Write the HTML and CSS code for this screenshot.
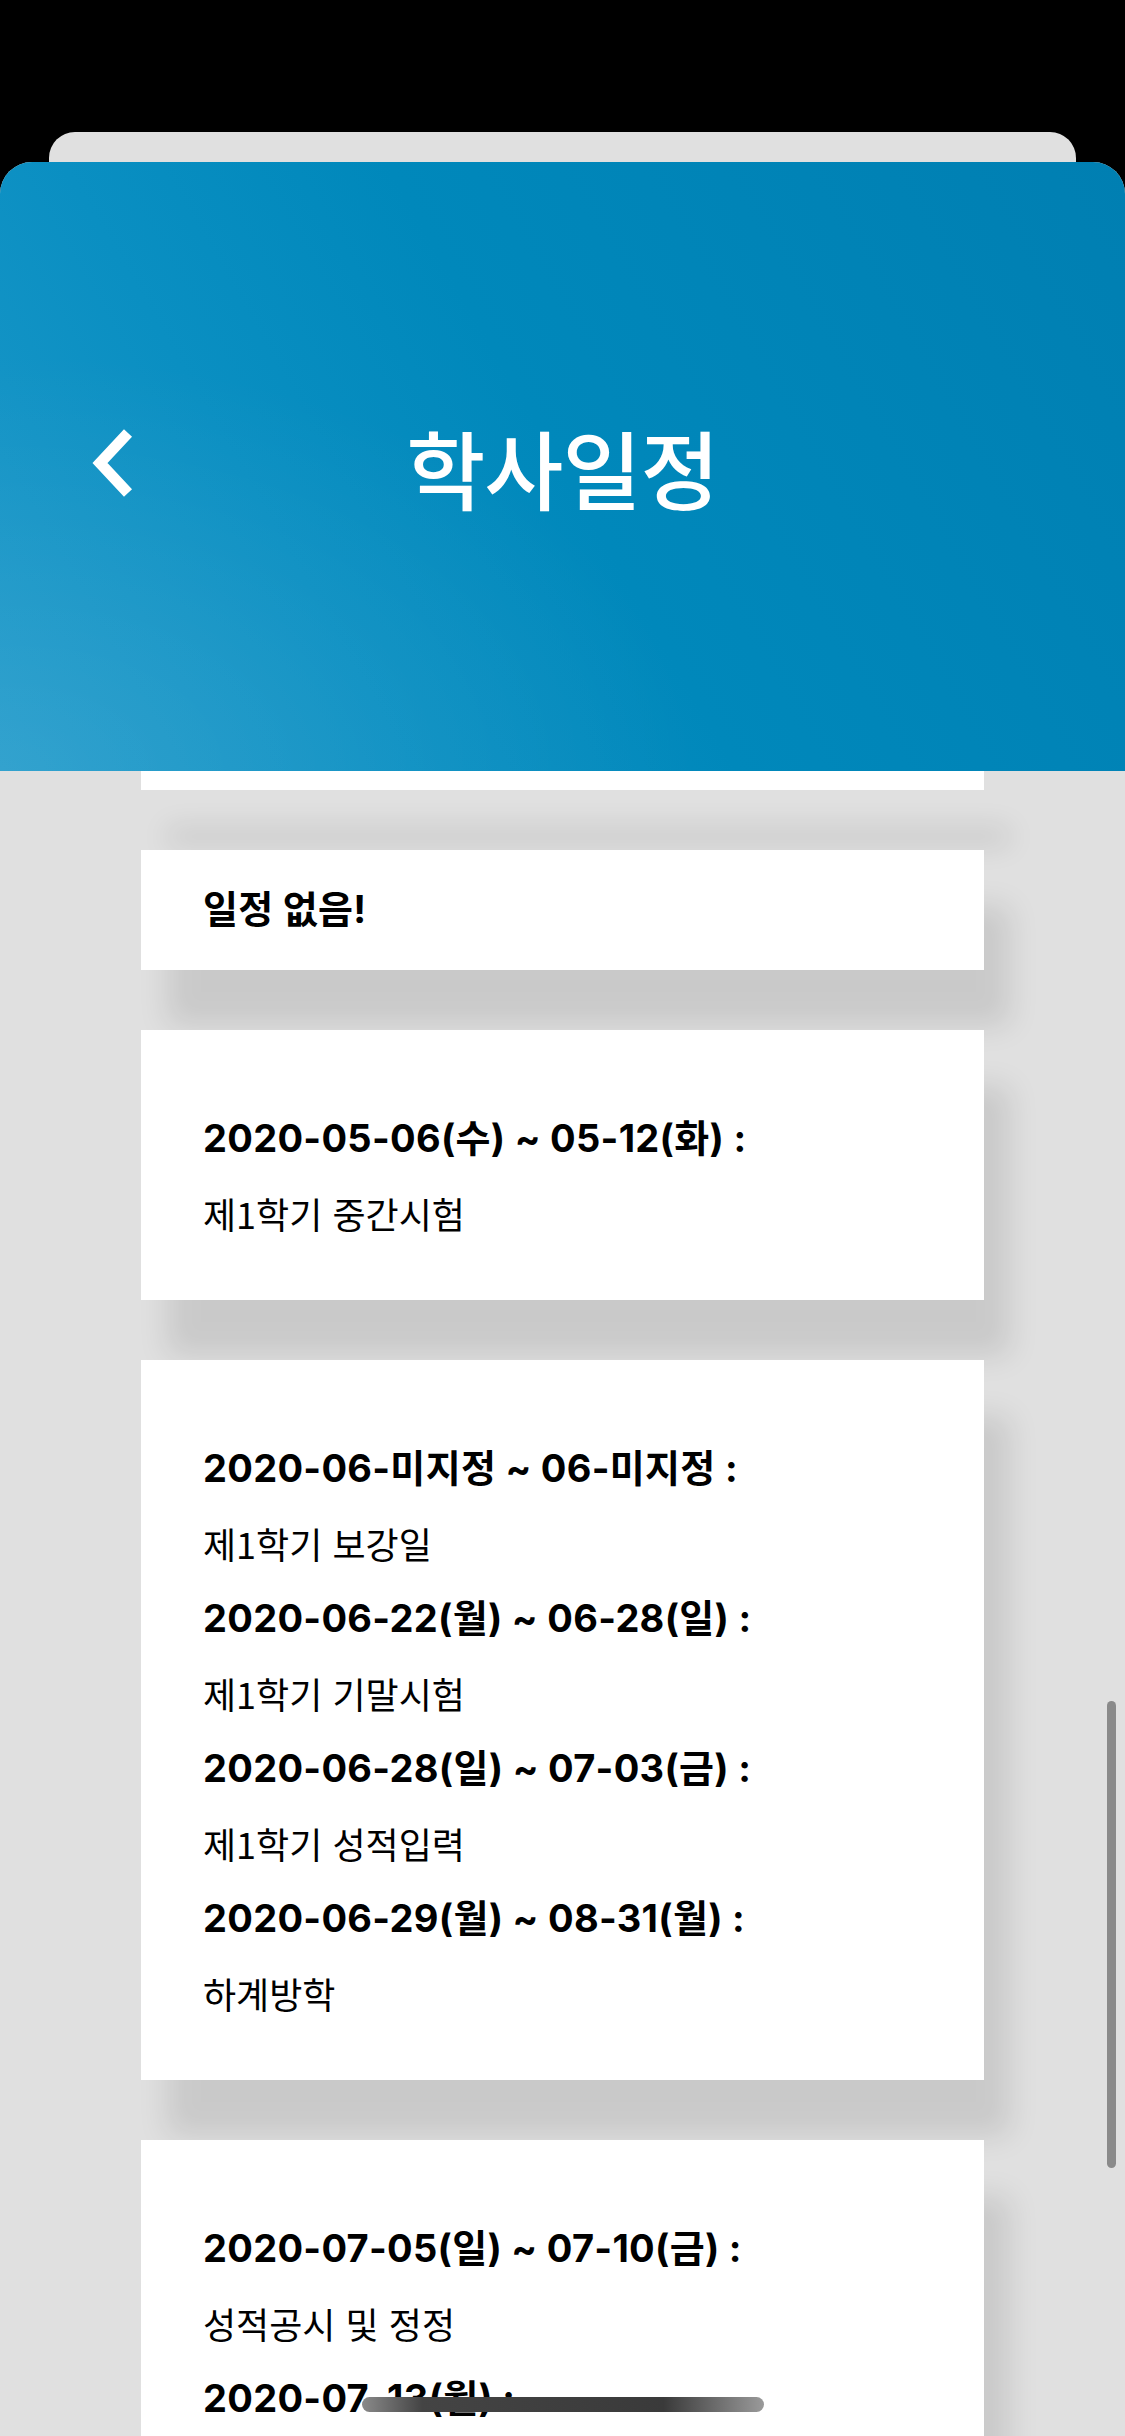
FILE: index.html
```html
<!DOCTYPE html>
<html lang="ko">
  <head>
    <meta charset="UTF-8" />
    <meta name="viewport" content="width=device-width, initial-scale=1.0" />
    <title>학사일정</title>
    <link rel="stylesheet" href="styles.css">
  </head>
  <body>
    <!-- sheet behind the modal -->
    <div class="sheet-back"></div>

    <div class="screen">
      <!-- Header Section -->
      <header class="top-bar">
        <a href="#" class="back">
          <svg width="44" height="70" viewBox="0 0 44 70">
            <polyline points="38,5 10,35 38,65" fill="none" stroke="#fff" stroke-width="11" />
          </svg>
        </a>
        <h1 class="title">학사일정</h1>
        <div></div>
      </header>

      <!-- Schedule List -->
      <main class="list">
        <div class="card stub"></div>

        <div class="card empty">
          <p class="date">일정 없음!</p>
        </div>

        <div class="card">
          <p class="date">2020-05-06(수) ~ 05-12(화) :</p>
          <p class="desc">제1학기 중간시험</p>
        </div>

        <div class="card">
          <p class="date">2020-06-미지정 ~ 06-미지정 :</p>
          <p class="desc">제1학기 보강일</p>
          <p class="date">2020-06-22(월) ~ 06-28(일) :</p>
          <p class="desc">제1학기 기말시험</p>
          <p class="date">2020-06-28(일) ~ 07-03(금) :</p>
          <p class="desc">제1학기 성적입력</p>
          <p class="date">2020-06-29(월) ~ 08-31(월) :</p>
          <p class="desc">하계방학</p>
        </div>

        <div class="card">
          <p class="date">2020-07-05(일) ~ 07-10(금) :</p>
          <p class="desc">성적공시 및 정정</p>
          <p class="date">2020-07-13(월) :</p>
        </div>
      </main>
    </div>

    <div class="scroll-thumb"></div>
    <div class="home-bar"></div>
  </body>
</html>
```

FILE: styles.css
```css
html,
body {
  margin: 0;
  height: 2436px;
  overflow: hidden;
}

body {
  font-family: "Noto Sans CJK KR", "Liberation Sans", sans-serif;
  background-color: #000;
  padding-top: 132px;
  box-sizing: border-box;
}

.sheet-back {
  height: 30px;
  margin: 0 49px;
  background-color: #e0e0e0;
  border-radius: 26px 26px 0 0;
}

.screen {
  background-color: #e0e0e0;
  border-radius: 32px 32px 0 0;
  overflow: hidden;
  min-height: 2300px;
}

/* Header */
.top-bar {
  height: 609px;
  display: grid;
  grid-template-columns: 1fr auto 1fr;
  align-items: center;
  background:
    radial-gradient(ellipse 700px 420px at 0% 100%, rgba(255, 255, 255, 0.1), rgba(255, 255, 255, 0) 100%),
    linear-gradient(60deg, #1c98c9 0%, #0a8fc2 28%, #0088bb 50%, #007fb2 100%);
}

.back {
  display: block;
  width: 44px;
  height: 70px;
  margin-left: 90px;
  margin-top: -8px;
}

.back svg {
  display: block;
}

.title {
  margin: 0;
  color: #fff;
  font-size: 86px;
  font-weight: 500;
  letter-spacing: -1px;
  line-height: 1;
}

/* Cards */
.list {
  display: flex;
  flex-direction: column;
  gap: 60px;
}

.card {
  background-color: #fff;
  margin: 0 141px;
  padding: 71px 0 49px 62px;
  box-shadow: 26px 56px 28px rgba(0, 0, 0, 0.1);
}

.card.stub {
  height: 19px;
  padding: 0;
}

.card.empty {
  padding: 22px 0 23px 62px;
}

.card p {
  margin: 0;
  height: 75px;
  line-height: 75px;
  font-size: 36px;
  color: #000;
}

.card .date {
  font-family: Inter, "Noto Sans CJK KR", sans-serif;
  font-size: 38px;
  font-weight: 700;
  letter-spacing: 0.3px;
}

.card .desc {
  font-weight: 400;
}

/* overlays */
.scroll-thumb {
  position: fixed;
  left: 1107px;
  top: 1701px;
  width: 9px;
  height: 467px;
  border-radius: 5px;
  background-color: #8a8a8a;
}

.home-bar {
  position: fixed;
  left: 362px;
  top: 2397px;
  width: 402px;
  height: 15px;
  border-radius: 8px;
  background: linear-gradient(to right, #8a8a8a, #444 15%, #3a3a3a 75%, #9a9a9a);
}
```
